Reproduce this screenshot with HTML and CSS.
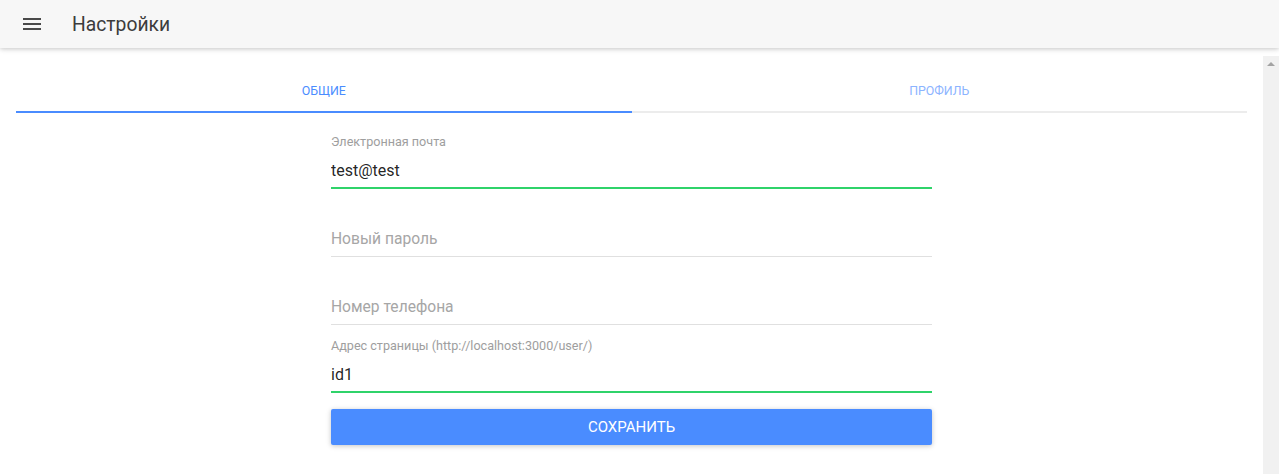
FILE: index.html
```html
<!DOCTYPE html>
<html lang="ru">
<head>
<meta charset="utf-8">
<title>Настройки</title>
<link rel="stylesheet" href="styles.css">
</head>
<body>
<header class="appbar">
  <button class="appbar__menu" aria-label="Меню">
    <svg width="24" height="24" viewBox="0 0 24 24"><path d="M3 18h18v-2H3v2zm0-5h18v-2H3v2zm0-7v2h18V6H3z" fill="currentColor"/></svg>
  </button>
  <h1 class="appbar__title">Настройки</h1>
</header>
<div class="viewport">
  <main class="content">
    <nav class="tabs">
      <div class="tabs__row">
        <button class="tab tab--active">Общие</button>
        <button class="tab">Профиль</button>
      </div>
      <div class="tabs__track"><div class="tabs__indicator"></div></div>
    </nav>
    <form class="form">
      <label class="field">
        <span class="field__label">Электронная почта</span>
        <input class="field__input" type="text" value="test@test">
        <span class="field__line field__line--active"></span>
      </label>
      <label class="field">
        <span class="field__label"></span>
        <input class="field__input" type="password" placeholder="Новый пароль">
        <span class="field__line"></span>
      </label>
      <label class="field">
        <span class="field__label"></span>
        <input class="field__input" type="text" placeholder="Номер телефона">
        <span class="field__line"></span>
      </label>
      <label class="field">
        <span class="field__label">Адрес страницы (http://localhost:3000/user/)</span>
        <input class="field__input" type="text" value="id1">
        <span class="field__line field__line--active"></span>
      </label>
      <button class="save" type="button">Сохранить</button>
    </form>
  </main>
  <div class="scrollbar"><span class="scrollbar__arrow"></span></div>
</div>
</body>
</html>
```
FILE: styles.css
```css
* { box-sizing: border-box; }
html, body { margin: 0; height: 100%; }
body {
  font-family: Roboto, "Noto Sans", "Liberation Sans", sans-serif;
  background: #fff;
  overflow: hidden;
  display: flex;
  flex-direction: column;
}
.appbar {
  height: 48px;
  flex: 0 0 48px;
  background: #f7f7f7;
  display: flex;
  align-items: center;
  box-shadow: 0 1px 6px rgba(0,0,0,.12), 0 1px 4px rgba(0,0,0,.12);
  position: relative;
  z-index: 2;
}
.appbar__menu {
  border: 0;
  background: none;
  padding: 0;
  margin-left: 20px;
  width: 24px;
  height: 24px;
  color: #4a4a4a;
  display: flex;
}
.appbar__title {
  margin: 0 0 0 28px;
  font-size: 19.3px;
  font-weight: 400;
  color: #3c3c3c;
  line-height: 24px;
  padding-top: 1px;
}
.viewport {
  flex: 1;
  margin-top: 8px;
  display: flex;
  min-height: 0;
}
.content {
  flex: 1;
  padding: 0 16px;
}
.scrollbar {
  flex: 0 0 16px;
  background: #f1f1f1;
  display: flex;
  justify-content: center;
  padding-top: 6px;
}
.scrollbar__arrow {
  width: 0;
  height: 0;
  border-left: 4px solid transparent;
  border-right: 4px solid transparent;
  border-bottom: 4px solid #a3a3a3;
}
.tabs__row {
  display: flex;
}
.tab {
  flex: 1;
  border: 0;
  background: none;
  font: 400 12.4px/14px Roboto, sans-serif;
  text-transform: uppercase;
  color: #8cb4ff;
  padding: 28px 0 13px;
  cursor: pointer;
}
.tab--active { color: #4a8cff; }
.tabs__track {
  height: 2px;
  background: #ececec;
}
.tabs__indicator {
  width: 50%;
  height: 2px;
  background: #4a8cff;
}
.form {
  width: 601px;
  margin: 8px auto 0;
  display: flex;
  flex-direction: column;
}
.field {
  display: flex;
  flex-direction: column;
  height: 68px;
  padding-top: 13px;
}
.field__label {
  font-size: 12.6px;
  line-height: 15px;
  height: 15px;
  color: #9e9e9e;
}
.field__input {
  margin-top: 12px;
  height: 20px;
  border: 0;
  padding: 0;
  outline: none;
  background: transparent;
  font: 400 16px/20px Roboto, sans-serif;
  color: rgba(0,0,0,.87);
}
.field__input::placeholder { color: #a6a6a6; opacity: 1; font-size: 15.6px; }
.field__line {
  margin-top: 6px;
  height: 2px;
  box-shadow: inset 0 -1px #e0e0e0;
}
.field__line--active {
  background: #2fd36a;
  box-shadow: none;
}
.save {
  margin-top: 16px;
  height: 36px;
  border: 0;
  border-radius: 2px;
  background: #4a8cff;
  color: #fff;
  font: 400 15px/35px Roboto, sans-serif;
  text-transform: uppercase;
  box-shadow: 0 1px 6px rgba(0,0,0,.12), 0 1px 4px rgba(0,0,0,.12);
  cursor: pointer;
}
```
